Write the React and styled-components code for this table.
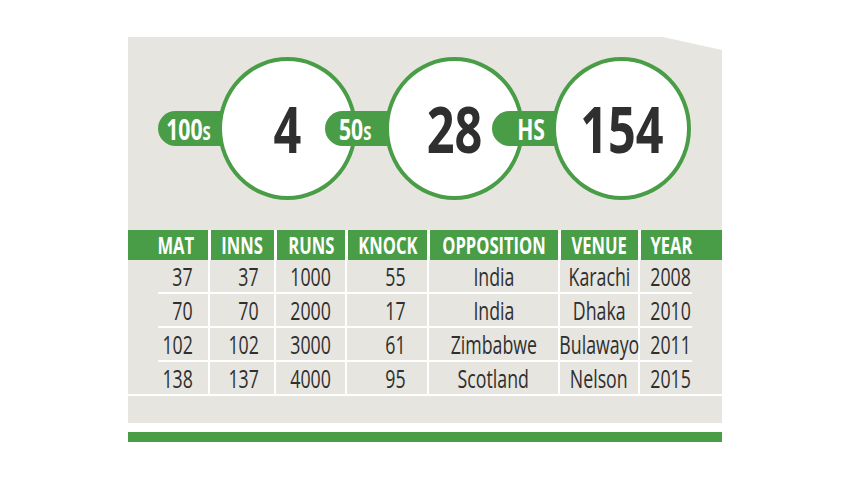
import React from "react";
import styled, { createGlobalStyle } from "styled-components";

const GREEN = "#4a9d47";
const PAPER = "#e6e5df";
const INK = "#2f2f2f";
const COLS = "80px 66px 71px 82px 131px 80px 84px";

const Global = createGlobalStyle`
    body {
        margin: 0;
        background: #fff;
        font-family: "Open Sans", "Liberation Sans", sans-serif;
    }
`;

const Page = styled.div`
    padding: 37px 0 0 128px;
`;

const Panel = styled.div`
    width: 594px;
    background: ${PAPER};
    clip-path: polygon(0 0, 535px 0, 100% 13px, 100% 100%, 0 100%);
`;

const Stats = styled.div`
    display: flex;
    align-items: center;
    padding: 20px 0 30px 30px;
`;

const Stat = styled.div`
    display: flex;
    align-items: center;
    & + & {
        margin-left: -32px;
    }
`;

const Pill = styled.div`
    width: 80px;
    height: 35px;
    margin-right: -20px;
    box-sizing: border-box;
    padding: 0 20px 0 ${p => p.$shift || 0}px;
    border-radius: 18px 0 0 18px;
    background: ${GREEN};
    color: #fff;
    display: flex;
    align-items: center;
    justify-content: center;
    font-weight: 700;
    font-size: 29px;
`;

const Small = styled.span`
    font-size: 0.7em;
`;

const Circle = styled.div`
    width: 139px;
    height: 143px;
    box-sizing: border-box;
    border: 4px solid ${GREEN};
    border-radius: 50%;
    background: #fff;
    display: flex;
    align-items: center;
    justify-content: center;
    font-weight: 700;
    font-size: 64px;
    color: ${INK};
`;

const Squeeze = styled.span`
    display: inline-block;
    white-space: nowrap;
    line-height: 1;
    transform: scaleX(${p => p.$k || 0.75});
    transform-origin: ${p => p.$origin || "center"};
`;

const HeadRow = styled.div`
    display: grid;
    grid-template-columns: ${COLS};
`;

const HeadCell = styled.div`
    height: 30px;
    box-sizing: border-box;
    background: ${GREEN};
    color: #fff;
    font-weight: 700;
    font-size: 24px;
    display: flex;
    align-items: center;
    justify-content: ${p => p.$align};
    padding-right: ${p => p.$pr || 0}px;
    & + & {
        border-left: 3px solid #fff;
    }
`;

const Row = styled.div`
    display: grid;
    grid-template-columns: ${COLS};
    background: linear-gradient(#fff, #fff) no-repeat;
    background-position: ${p => (p.$last ? "0" : "30px")} 100%;
    background-size: ${p => (p.$last ? "100%" : "calc(100% - 60px)")} 2px;
`;

const Cell = styled.div`
    height: 34px;
    box-sizing: border-box;
    padding-bottom: 2px;
    color: ${INK};
    font-size: 25px;
    display: flex;
    align-items: center;
    justify-content: ${p => p.$align};
    padding-right: ${p => p.$pr || 0}px;
    & + & {
        border-left: 2px solid #fff;
    }
`;

const Strip = styled.div`
    height: 27px;
`;

const GreenBar = styled.div`
    width: 594px;
    height: 10px;
    margin-top: 9px;
    background: ${GREEN};
`;

const stats = [
    { label: "100", small: "S", value: "4" },
    { label: "50", small: "S", value: "28" },
    { label: "HS", value: "154", shift: 18 },
];

const columns = [
    { label: "MAT", head: "flex-end", headPr: 14, body: "flex-end", pr: 15 },
    { label: "INNS", head: "center", body: "flex-end", pr: 15 },
    { label: "RUNS", head: "center", body: "center" },
    { label: "KNOCK", head: "center", body: "flex-end", pr: 21 },
    { label: "OPPOSITION", head: "center", body: "center" },
    { label: "VENUE", head: "center", body: "center" },
    { label: "YEAR", head: "center", headPr: 20, body: "center", pr: 20 },
];

const rows = [
    ["37", "37", "1000", "55", "India", "Karachi", "2008"],
    ["70", "70", "2000", "17", "India", "Dhaka", "2010"],
    ["102", "102", "3000", "61", "Zimbabwe", "Bulawayo", "2011"],
    ["138", "137", "4000", "95", "Scotland", "Nelson", "2015"],
];

const originFor = align => (align === "flex-end" ? "right center" : "center");

const App = () => {
    return (
        <Page>
            <Global />
            <Panel>
                <Stats>
                    {stats.map(s => (
                        <Stat key={s.label}>
                            <Pill $shift={s.shift}>
                                <Squeeze $k={0.73}>
                                    {s.label}
                                    {s.small && <Small>{s.small}</Small>}
                                </Squeeze>
                            </Pill>
                            <Circle>
                                <Squeeze $k={0.76}>{s.value}</Squeeze>
                            </Circle>
                        </Stat>
                    ))}
                </Stats>

                <HeadRow>
                    {columns.map(c => (
                        <HeadCell key={c.label} $align={c.head} $pr={c.headPr}>
                            <Squeeze $k={0.69} $origin={originFor(c.head)}>{c.label}</Squeeze>
                        </HeadCell>
                    ))}
                </HeadRow>

                {rows.map((r, i) => (
                    <Row key={i} $last={i === rows.length - 1}>
                        {r.map((v, j) => (
                            <Cell key={j} $align={columns[j].body} $pr={columns[j].pr}>
                                <Squeeze $k={0.71} $origin={originFor(columns[j].body)}>{v}</Squeeze>
                            </Cell>
                        ))}
                    </Row>
                ))}
                <Strip />
            </Panel>
            <GreenBar />
        </Page>
    );
};

export default App;
